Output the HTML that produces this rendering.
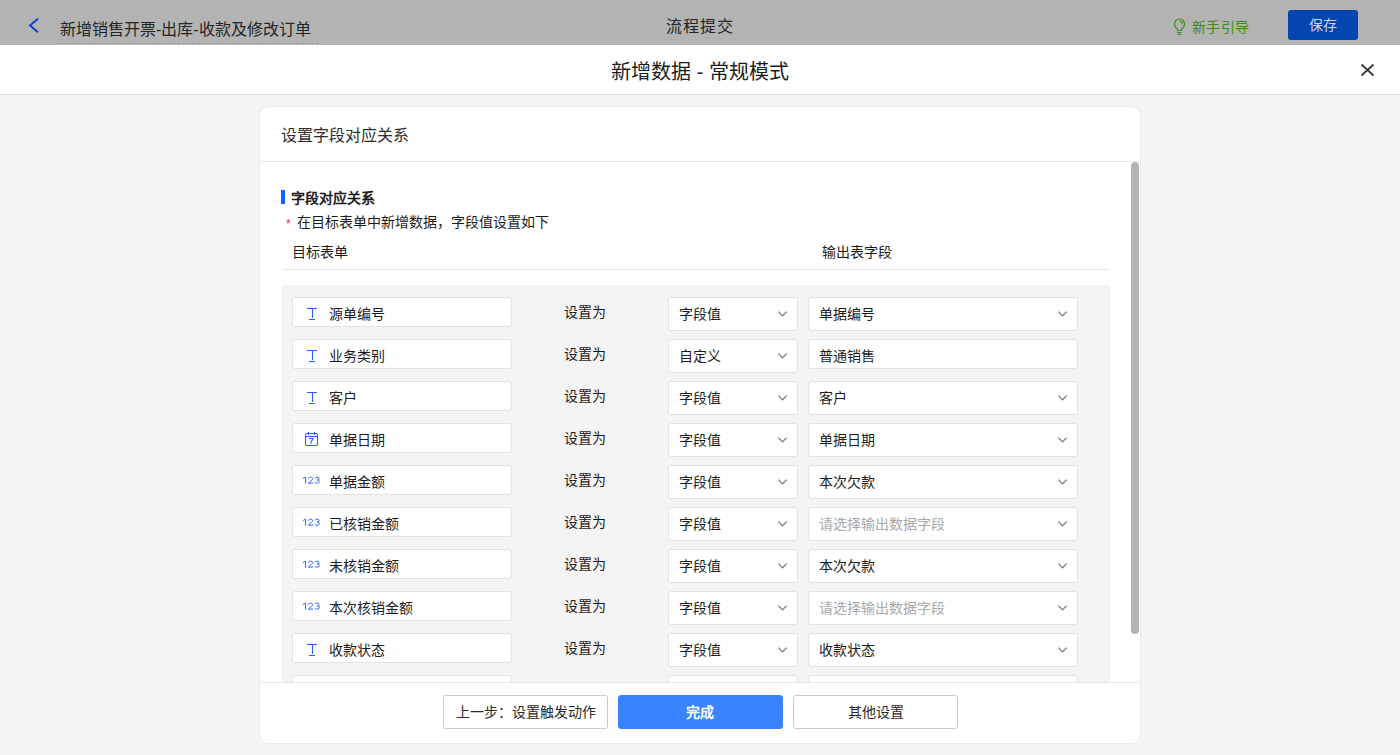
<!DOCTYPE html>
<html lang="zh-CN"><head><meta charset="utf-8">
<style>
*{box-sizing:border-box;margin:0;padding:0}
html,body{width:1400px;height:755px;overflow:hidden;font-family:"Liberation Sans",sans-serif;color:#333;background:#f4f4f4}
.abs{position:absolute}
#top{position:absolute;left:0;top:0;width:1400px;height:45px;background:#b3b3b3}
#top .back{position:absolute;left:28px;top:17px}
#top .ttl{position:absolute;left:60px;top:19px;font-size:16px;color:#242424;line-height:22px;white-space:nowrap}
#top .dash{position:absolute;left:58px;top:43px;width:261px;border-top:1px dashed #9c9c9c}
#top .mid{position:absolute;left:666px;top:16px;font-size:16px;color:#242424;line-height:22px;letter-spacing:1px}
#top .guide{position:absolute;left:1192px;top:17px;font-size:14px;color:#3f8a1c;line-height:20px;letter-spacing:0.4px}
#top .save{position:absolute;left:1288px;top:10px;width:70px;height:30px;background:#0446b1;border-radius:3px;color:#cdd6ea;font-size:14px;line-height:30px;text-align:center}
#hdr{position:absolute;left:0;top:45px;width:1400px;height:50px;background:#fff;border-bottom:1px solid #e2e2e2}
#hdr .t{position:absolute;left:0;width:1400px;top:14px;text-align:center;font-size:20px;line-height:26px;color:#1c1c1c}
#card{position:absolute;left:260px;top:107px;width:880px;height:636px;background:#fff;border-radius:9px;overflow:hidden;box-shadow:0 0 0 1px rgba(0,0,0,0.035)}
#card .ch{position:absolute;left:21px;top:18px;font-size:16px;color:#2e2e2e;line-height:22px}
#card .chb{position:absolute;left:1px;top:54px;width:878px;border-top:1px solid #e6e6e6}
.sb{position:absolute;left:871px;top:55px;width:8px;height:472px;background:#b3b3b3;border-radius:4px}
.sec{position:absolute;left:21px;top:83px;width:4px;height:14px;background:#1463ff}
.sect{position:absolute;left:31px;top:81px;font-size:14px;font-weight:bold;color:#1c1c1c;line-height:20px}
.req{position:absolute;left:26px;top:105px;font-size:14px;line-height:20px;color:#1c1c1c}
.req i{font-style:normal;color:#f0155a;font-size:12px;margin-right:6px;position:relative;top:1px}
.colh{position:absolute;top:135px;font-size:14px;line-height:20px;color:#1c1c1c}
.hl{position:absolute;left:22px;top:162px;width:828px;border-top:1px solid #e6e6e6}
.rows{position:absolute;left:22px;top:178px;width:828px;height:400px;background:#f4f4f4;border-radius:2px}
.row{position:absolute;left:0;height:30px;width:828px}
.inp{position:absolute;left:10px;top:0;width:220px;height:30px;background:#fff;border:1px solid #e2e2e2;border-radius:3px}
.inp .ic{position:absolute;left:14px;top:8px}
.inp .tx{position:absolute;left:36px;top:6px;font-size:14px;line-height:20px;color:#1c1c1c}
.num{position:absolute;left:9px;top:10px;font-size:10px;line-height:12px;color:#4a6cf0;letter-spacing:0.3px}
.set{position:absolute;left:282px;top:5px;font-size:14px;line-height:20px;color:#1c1c1c}
.s1{position:absolute;left:386px;top:0;width:130px;height:34px;background:#fff;border:1px solid #e2e2e2;border-radius:3px}
.s2{position:absolute;left:526px;top:0;width:270px;height:34px;background:#fff;border:1px solid #e2e2e2;border-radius:3px}
.s1 .tx,.s2 .tx{position:absolute;left:10px;top:6px;font-size:14px;line-height:20px;color:#1c1c1c}
.s2 .tx.ph{color:#a8a8a8}
.arr{position:absolute;right:9px;top:12px}
#foot{position:absolute;left:0;top:575px;width:880px;height:61px;background:#fff}
#foot:before{content:"";position:absolute;left:1px;top:0;width:878px;border-top:1px solid #e6e6e6}
.btn{position:absolute;top:13px;width:165px;height:34px;border:1px solid #c9c9c9;border-radius:3px;background:#fff;text-align:center;font-size:14px;line-height:32px;color:#2a2a2a}
.btn.pri{background:#3884ff;border-color:#3884ff;color:#fff;font-weight:600;padding-right:2px}
</style></head><body>
<div id="top">
  <svg class="back" width="14" height="18" viewBox="0 0 14 18"><path d="M10 1.8 L2 8.5 L10 15.2" fill="none" stroke="#0c3fcf" stroke-width="1.9"/></svg>
  <div class="ttl">新增销售开票-出库-收款及修改订单</div>
  <div class="dash"></div>
  <div class="mid">流程提交</div>
  <svg class="abs" style="left:1173px;top:18px" width="14" height="18" viewBox="0 0 14 18"><path d="M4.5 11 C2.6 9.8 1.5 8 1.5 6 A5 5 0 0 1 11.5 6 C11.5 8 10.4 9.8 8.5 11 V12.5 H4.5 Z M6.8 3 A3 3 0 0 1 9.2 5.6 M4.5 14.5 H8.5 M5.2 16.3 H7.8" fill="none" stroke="#3f8d1c" stroke-width="1.2" stroke-linejoin="round" stroke-linecap="round"/></svg>
  <div class="guide">新手引导</div>
  <div class="save">保存</div>
</div>
<div id="hdr">
  <div class="t">新增数据 - 常规模式</div>
  <svg class="abs" style="left:1360px;top:63px;position:fixed" width="15" height="14" viewBox="0 0 15 14"><path d="M1.5 1.5L13.5 12.5M13.5 1.5L1.5 12.5" stroke="#3a3a44" stroke-width="1.8"/></svg>
</div>
<div id="card">
  <div class="ch">设置字段对应关系</div>
  <div class="chb"></div>
  <div class="sec"></div>
  <div class="sect">字段对应关系</div>
  <div class="req"><i>*</i>在目标表单中新增数据，字段值设置如下</div>
  <div class="colh" style="left:32px">目标表单</div>
  <div class="colh" style="left:562px">输出表字段</div>
  <div class="hl"></div>
  <div class="rows" id="rows">
<div class="row" style="top:12px"><div class="inp"><svg class="ic" style="left:14px;top:9px" width="11" height="14" viewBox="0 0 11 14"><path d="M0 1.5H10M5.5 2V11M2 12.5H8" fill="none" stroke="#2a5cff" stroke-width="1.1"/></svg><div class="tx">源单编号</div></div><div class="set">设置为</div><div class="s1"><div class="tx">字段值</div><svg class="arr" width="11" height="7" viewBox="0 0 11 7"><path d="M1.4 1.6L5.5 5.9L9.6 1.6" fill="none" stroke="#75757f" stroke-width="1.15"/></svg></div><div class="s2"><div class="tx">单据编号</div><svg class="arr" width="11" height="7" viewBox="0 0 11 7"><path d="M1.4 1.6L5.5 5.9L9.6 1.6" fill="none" stroke="#75757f" stroke-width="1.15"/></svg></div></div>
<div class="row" style="top:54px"><div class="inp"><svg class="ic" style="left:14px;top:9px" width="11" height="14" viewBox="0 0 11 14"><path d="M0 1.5H10M5.5 2V11M2 12.5H8" fill="none" stroke="#2a5cff" stroke-width="1.1"/></svg><div class="tx">业务类别</div></div><div class="set">设置为</div><div class="s1"><div class="tx">自定义</div><svg class="arr" width="11" height="7" viewBox="0 0 11 7"><path d="M1.4 1.6L5.5 5.9L9.6 1.6" fill="none" stroke="#75757f" stroke-width="1.15"/></svg></div><div class="s2" style="height:30px"><div class="tx">普通销售</div></div></div>
<div class="row" style="top:96px"><div class="inp"><svg class="ic" style="left:14px;top:9px" width="11" height="14" viewBox="0 0 11 14"><path d="M0 1.5H10M5.5 2V11M2 12.5H8" fill="none" stroke="#2a5cff" stroke-width="1.1"/></svg><div class="tx">客户</div></div><div class="set">设置为</div><div class="s1"><div class="tx">字段值</div><svg class="arr" width="11" height="7" viewBox="0 0 11 7"><path d="M1.4 1.6L5.5 5.9L9.6 1.6" fill="none" stroke="#75757f" stroke-width="1.15"/></svg></div><div class="s2"><div class="tx">客户</div><svg class="arr" width="11" height="7" viewBox="0 0 11 7"><path d="M1.4 1.6L5.5 5.9L9.6 1.6" fill="none" stroke="#75757f" stroke-width="1.15"/></svg></div></div>
<div class="row" style="top:138px"><div class="inp"><svg class="ic" style="left:11px;top:7px" width="16" height="16" viewBox="0 0 16 16"><rect x="1.5" y="2.5" width="12" height="12" rx="1.5" fill="none" stroke="#3a5cff" stroke-width="1.1"/><path d="M4.5 1V4M10.5 1V4M1.5 5.5H13.5" fill="none" stroke="#2a5cff" stroke-width="1.1"/><path d="M5 7.5H9L6.5 12.5" fill="none" stroke="#2a5cff" stroke-width="1.1"/></svg><div class="tx">单据日期</div></div><div class="set">设置为</div><div class="s1"><div class="tx">字段值</div><svg class="arr" width="11" height="7" viewBox="0 0 11 7"><path d="M1.4 1.6L5.5 5.9L9.6 1.6" fill="none" stroke="#75757f" stroke-width="1.15"/></svg></div><div class="s2"><div class="tx">单据日期</div><svg class="arr" width="11" height="7" viewBox="0 0 11 7"><path d="M1.4 1.6L5.5 5.9L9.6 1.6" fill="none" stroke="#75757f" stroke-width="1.15"/></svg></div></div>
<div class="row" style="top:180px"><div class="inp"><svg class="ic" style="left:9px;top:10px" width="20" height="10" viewBox="0 0 20 10"><path d="M0.9 2.59L3.6 1.2V7.6M6.3 2.68C6.3 1.69 7.2 1.2 8.5 1.2C9.8 1.2 10.7 1.77 10.7 2.68C10.7 3.58 9.9 4.15 8.9 4.81L6.4 7.1H11M12.9 2.27C13.2 1.53 14 1.2 15.1 1.2C16.4 1.2 17.2 1.77 17.2 2.59C17.2 3.5 16.4 3.99 15.1 3.99C16.6 3.99 17.4 4.64 17.4 5.55C17.4 6.53 16.5 7.19 15.1 7.19C13.9 7.19 13 6.69 12.8 5.87" fill="none" stroke="#2f64ff" stroke-width="1"/></svg><div class="tx">单据金额</div></div><div class="set">设置为</div><div class="s1"><div class="tx">字段值</div><svg class="arr" width="11" height="7" viewBox="0 0 11 7"><path d="M1.4 1.6L5.5 5.9L9.6 1.6" fill="none" stroke="#75757f" stroke-width="1.15"/></svg></div><div class="s2"><div class="tx">本次欠款</div><svg class="arr" width="11" height="7" viewBox="0 0 11 7"><path d="M1.4 1.6L5.5 5.9L9.6 1.6" fill="none" stroke="#75757f" stroke-width="1.15"/></svg></div></div>
<div class="row" style="top:222px"><div class="inp"><svg class="ic" style="left:9px;top:10px" width="20" height="10" viewBox="0 0 20 10"><path d="M0.9 2.59L3.6 1.2V7.6M6.3 2.68C6.3 1.69 7.2 1.2 8.5 1.2C9.8 1.2 10.7 1.77 10.7 2.68C10.7 3.58 9.9 4.15 8.9 4.81L6.4 7.1H11M12.9 2.27C13.2 1.53 14 1.2 15.1 1.2C16.4 1.2 17.2 1.77 17.2 2.59C17.2 3.5 16.4 3.99 15.1 3.99C16.6 3.99 17.4 4.64 17.4 5.55C17.4 6.53 16.5 7.19 15.1 7.19C13.9 7.19 13 6.69 12.8 5.87" fill="none" stroke="#2f64ff" stroke-width="1"/></svg><div class="tx">已核销金额</div></div><div class="set">设置为</div><div class="s1"><div class="tx">字段值</div><svg class="arr" width="11" height="7" viewBox="0 0 11 7"><path d="M1.4 1.6L5.5 5.9L9.6 1.6" fill="none" stroke="#75757f" stroke-width="1.15"/></svg></div><div class="s2"><div class="tx ph">请选择输出数据字段</div><svg class="arr" width="11" height="7" viewBox="0 0 11 7"><path d="M1.4 1.6L5.5 5.9L9.6 1.6" fill="none" stroke="#75757f" stroke-width="1.15"/></svg></div></div>
<div class="row" style="top:264px"><div class="inp"><svg class="ic" style="left:9px;top:10px" width="20" height="10" viewBox="0 0 20 10"><path d="M0.9 2.59L3.6 1.2V7.6M6.3 2.68C6.3 1.69 7.2 1.2 8.5 1.2C9.8 1.2 10.7 1.77 10.7 2.68C10.7 3.58 9.9 4.15 8.9 4.81L6.4 7.1H11M12.9 2.27C13.2 1.53 14 1.2 15.1 1.2C16.4 1.2 17.2 1.77 17.2 2.59C17.2 3.5 16.4 3.99 15.1 3.99C16.6 3.99 17.4 4.64 17.4 5.55C17.4 6.53 16.5 7.19 15.1 7.19C13.9 7.19 13 6.69 12.8 5.87" fill="none" stroke="#2f64ff" stroke-width="1"/></svg><div class="tx">未核销金额</div></div><div class="set">设置为</div><div class="s1"><div class="tx">字段值</div><svg class="arr" width="11" height="7" viewBox="0 0 11 7"><path d="M1.4 1.6L5.5 5.9L9.6 1.6" fill="none" stroke="#75757f" stroke-width="1.15"/></svg></div><div class="s2"><div class="tx">本次欠款</div><svg class="arr" width="11" height="7" viewBox="0 0 11 7"><path d="M1.4 1.6L5.5 5.9L9.6 1.6" fill="none" stroke="#75757f" stroke-width="1.15"/></svg></div></div>
<div class="row" style="top:306px"><div class="inp"><svg class="ic" style="left:9px;top:10px" width="20" height="10" viewBox="0 0 20 10"><path d="M0.9 2.59L3.6 1.2V7.6M6.3 2.68C6.3 1.69 7.2 1.2 8.5 1.2C9.8 1.2 10.7 1.77 10.7 2.68C10.7 3.58 9.9 4.15 8.9 4.81L6.4 7.1H11M12.9 2.27C13.2 1.53 14 1.2 15.1 1.2C16.4 1.2 17.2 1.77 17.2 2.59C17.2 3.5 16.4 3.99 15.1 3.99C16.6 3.99 17.4 4.64 17.4 5.55C17.4 6.53 16.5 7.19 15.1 7.19C13.9 7.19 13 6.69 12.8 5.87" fill="none" stroke="#2f64ff" stroke-width="1"/></svg><div class="tx">本次核销金额</div></div><div class="set">设置为</div><div class="s1"><div class="tx">字段值</div><svg class="arr" width="11" height="7" viewBox="0 0 11 7"><path d="M1.4 1.6L5.5 5.9L9.6 1.6" fill="none" stroke="#75757f" stroke-width="1.15"/></svg></div><div class="s2"><div class="tx ph">请选择输出数据字段</div><svg class="arr" width="11" height="7" viewBox="0 0 11 7"><path d="M1.4 1.6L5.5 5.9L9.6 1.6" fill="none" stroke="#75757f" stroke-width="1.15"/></svg></div></div>
<div class="row" style="top:348px"><div class="inp"><svg class="ic" style="left:14px;top:9px" width="11" height="14" viewBox="0 0 11 14"><path d="M0 1.5H10M5.5 2V11M2 12.5H8" fill="none" stroke="#2a5cff" stroke-width="1.1"/></svg><div class="tx">收款状态</div></div><div class="set">设置为</div><div class="s1"><div class="tx">字段值</div><svg class="arr" width="11" height="7" viewBox="0 0 11 7"><path d="M1.4 1.6L5.5 5.9L9.6 1.6" fill="none" stroke="#75757f" stroke-width="1.15"/></svg></div><div class="s2"><div class="tx">收款状态</div><svg class="arr" width="11" height="7" viewBox="0 0 11 7"><path d="M1.4 1.6L5.5 5.9L9.6 1.6" fill="none" stroke="#75757f" stroke-width="1.15"/></svg></div></div>
<div class="row" style="top:390px"><div class="inp"><svg class="ic" style="left:14px;top:9px" width="11" height="14" viewBox="0 0 11 14"><path d="M0 1.5H10M5.5 2V11M2 12.5H8" fill="none" stroke="#2a5cff" stroke-width="1.1"/></svg><div class="tx"></div></div><div class="set">设置为</div><div class="s1"><div class="tx">字段值</div><svg class="arr" width="11" height="7" viewBox="0 0 11 7"><path d="M1.4 1.6L5.5 5.9L9.6 1.6" fill="none" stroke="#75757f" stroke-width="1.15"/></svg></div><div class="s2"><div class="tx"></div><svg class="arr" width="11" height="7" viewBox="0 0 11 7"><path d="M1.4 1.6L5.5 5.9L9.6 1.6" fill="none" stroke="#75757f" stroke-width="1.15"/></svg></div></div>
</div>
  <div class="sb"></div>
  <div id="foot">
    <div class="btn" style="left:183px">上一步：设置触发动作</div>
    <div class="btn pri" style="left:358px">完成</div>
    <div class="btn" style="left:533px">其他设置</div>
  </div>
</div>
</body></html>
